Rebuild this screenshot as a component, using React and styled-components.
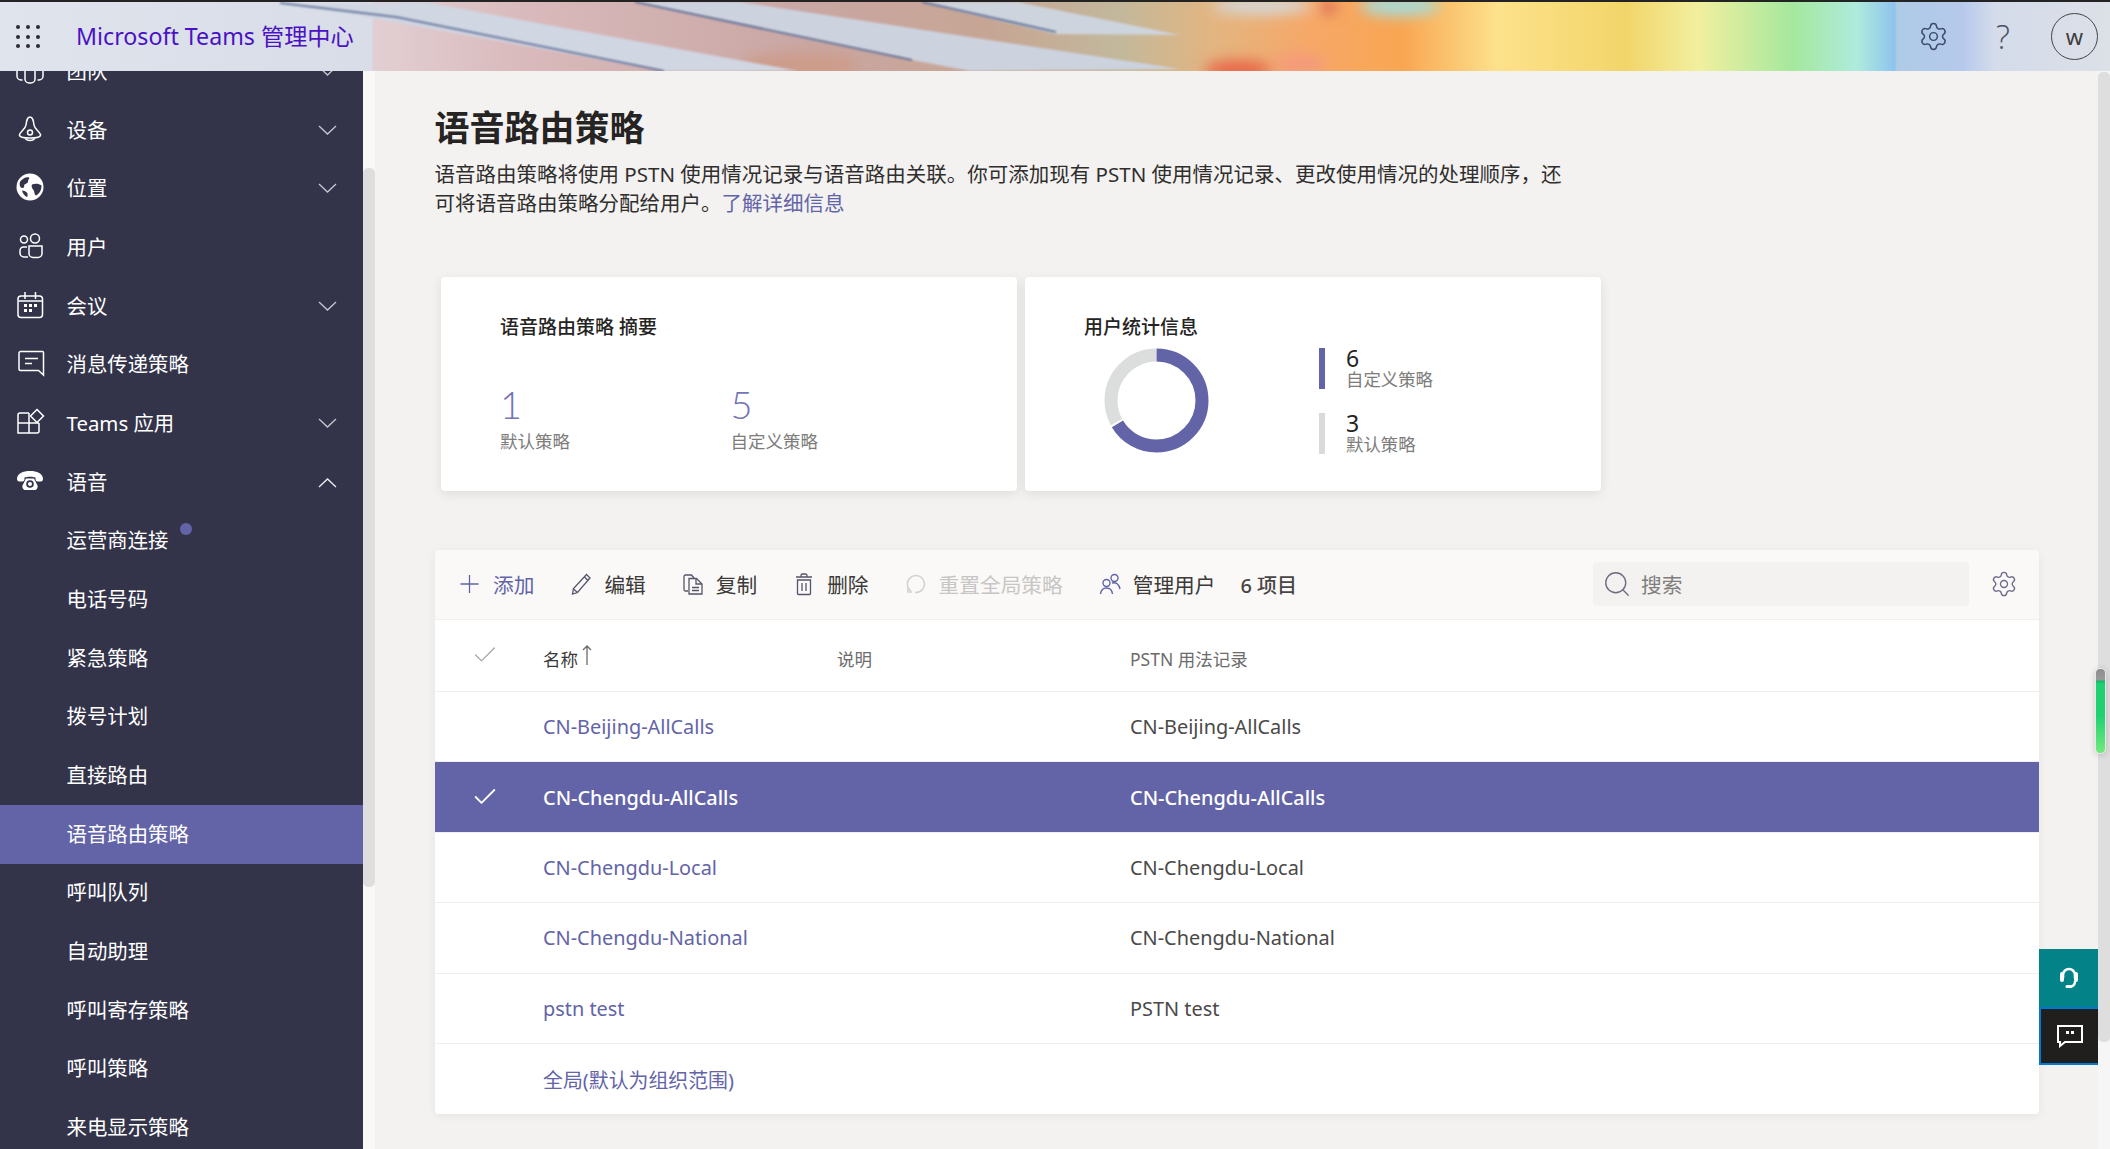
import React from "react";
import styled, { createGlobalStyle } from "styled-components";
import { Search, Settings, Check } from "lucide-react";

const purple = "#6264a7";
const font = `"Noto Sans", "Noto Sans CJK SC", sans-serif`;

const GlobalStyle = createGlobalStyle`
  html, body { margin: 0; padding: 0; height: 100%; overflow: hidden; }
  body { font-family: ${font}; background: #f3f2f1; color: #252423; }
  #root { height: 100%; }
`;

const Page = styled.div`
  position: relative;
  width: 2110px;
  height: 1149px;
  display: flex;
  flex-direction: column;
  overflow: hidden;
`;

const Header = styled.header`
  position: relative;
  z-index: 2;
  flex: 0 0 71px;
  display: flex;
  align-items: center;
  border-top: 2px solid #232323;
  box-sizing: border-box;
  overflow: hidden;
`;

const Art = styled.svg`
  position: absolute;
  left: 0;
  top: 0;
  width: 100%;
  height: 100%;
`;

const Waffle = styled.div`
  position: relative;
  margin-left: 16px;
  width: 24px;
  display: grid;
  grid-template-columns: repeat(3, 4px);
  gap: 5.5px;
  justify-content: space-between;
  span {
    width: 4px;
    height: 4px;
    border-radius: 50%;
    background: #2c2a33;
  }
`;

const Brand = styled.div`
  position: relative;
  margin-left: 36px;
  padding-bottom: 4px;
  font-size: 23.2px;
  color: #4a12c4;
  white-space: nowrap;
`;

const HeaderTools = styled.div`
  position: relative;
  margin-left: auto;
  display: flex;
  align-items: center;
  padding-right: 12px;
  color: #3c4a6a;
`;

const Help = styled.div`
  margin-left: 42px;
  width: 24px;
  text-align: center;
  font-size: 33px;
  font-weight: 300;
  font-family: "Open Sans", sans-serif;
  line-height: 36px;
  color: #4a5060;
`;

const Avatar = styled.div`
  margin-left: 36px;
  width: 47px;
  height: 47px;
  box-sizing: border-box;
  border: 1.5px solid #444;
  border-radius: 50%;
  display: flex;
  align-items: center;
  justify-content: center;
  font-size: 22px;
  color: #3d3d3d;
  padding-bottom: 1px;
`;

const Body = styled.div`
  flex: 1;
  display: flex;
  min-height: 0;
`;

const Sidebar = styled.nav`
  flex: 0 0 363px;
  background: #33344a;
  overflow: hidden;
`;

const NavList = styled.div`
  margin-top: -28.3px;
`;

const NavItem = styled.div`
  position: relative;
  height: 58.68px;
  display: flex;
  align-items: center;
  padding: 0 26px 4px ${(p) => (p.$sub ? 66.5 : 16)}px;
  box-sizing: border-box;
  background: ${(p) => (p.$active ? purple : "transparent")};
  color: #fff;
  font-size: 20.4px;
`;

const NavIcon = styled.svg`
  flex: 0 0 28px;
  width: 28px;
  height: 28px;
  margin-right: 22.5px;
  overflow: visible;
`;

const NavChevron = styled.svg`
  margin: 3px 0 0 auto;
  width: 19px;
  height: 11px;
`;

const Dot = styled.span`
  position: absolute;
  left: 179.5px;
  top: 10.5px;
  width: 12px;
  height: 12px;
  border-radius: 50%;
  background: ${purple};
`;

const Track = styled.div`
  flex: 0 0 ${(p) => p.$w}px;
  background: ${(p) => p.$bg};
`;

const Thumb = styled.div`
  margin-top: ${(p) => p.$top}px;
  height: ${(p) => p.$h}px;
  background: #dedede;
  border-radius: 5px;
`;

const Main = styled.main`
  flex: 1;
  min-width: 0;
  padding: 37px 59px 0 59.5px;
  background: #f3f2f1;
`;

const Title = styled.h1`
  margin: 0;
  font-size: 35px;
  line-height: 40px;
  font-weight: 700;
  color: #252423;
`;

const Intro = styled.p`
  margin: 11.5px 0 0;
  font-size: 20.5px;
  line-height: 29px;
  color: #2f2e2d;
  white-space: nowrap;
  a {
    color: ${purple};
    text-decoration: none;
  }
`;

const Cards = styled.div`
  margin: 59.5px 0 0 6.5px;
  display: flex;
  gap: 8px;
`;

const Card = styled.section`
  width: 576px;
  height: 214px;
  box-sizing: border-box;
  padding: 37px 0 0 59px;
  background: #fff;
  border-radius: 4px;
  box-shadow: 0 3px 12px rgba(0, 0, 0, 0.09);
  display: ${(p) => (p.$row ? "flex" : "block")};
`;

const CardTitle = styled.h2`
  margin: 0;
  font-size: 19px;
  line-height: 26px;
  font-weight: 500;
  color: #252423;
`;

const Stats = styled.div`
  display: flex;
  margin-top: 42px;
`;

const Stat = styled.div`
  width: 230.5px;
`;

const StatNum = styled.div`
  font-family: Lato, sans-serif;
  font-weight: 300;
  font-size: 38px;
  line-height: 44px;
  color: #7274b6;
`;

const StatLabel = styled.div`
  margin-top: 3px;
  font-size: 17.5px;
  line-height: 24px;
  color: #7d7c7b;
`;

const ChartCol = styled.div`
  width: 235px;
`;

const Donut = styled.svg`
  display: block;
  width: 105px;
  height: 105px;
  margin: 8px 0 0 20px;
`;

const Legend = styled.div`
  padding-top: 34px;
  display: flex;
  flex-direction: column;
  gap: 24px;
`;

const LegendRow = styled.div`
  height: 41px;
  display: flex;
  border-left: 6px solid ${(p) => p.$color};
  padding-left: 21px;
  flex-direction: column;
  justify-content: flex-end;
`;

const LegendNum = styled.div`
  font-size: 23px;
  line-height: 21px;
  color: #252423;
`;

const LegendLabel = styled.div`
  font-size: 17.4px;
  line-height: 20px;
  color: #7d7c7b;
`;

const Table = styled.section`
  margin-top: 59px;
  background: #fff;
  border-radius: 4px;
  box-shadow: 0 2px 10px rgba(0, 0, 0, 0.06);
  overflow: hidden;
`;

const Toolbar = styled.div`
  height: 70px;
  box-sizing: border-box;
  border-bottom: 1px solid #f0efee;
  background: #faf9f8;
  display: flex;
  align-items: center;
  padding: 0 0 1px 24.5px;
  gap: 36px;
`;

const ToolItem = styled.div`
  display: flex;
  align-items: center;
  gap: 12px;
  font-size: 20.7px;
  white-space: nowrap;
  color: ${(p) => (p.$primary ? purple : p.$disabled ? "#c8c6c4" : "#3b3a39")};
`;

const ToolIcon = styled.svg`
  width: 22px;
  height: 24px;
  flex: 0 0 22px;
  color: ${(p) => (p.$disabled ? "#d2d0ce" : p.$purple ? purple : "#55546a")};
`;

const Count = styled.div`
  margin-left: -11px;
  font-size: 20px;
  font-weight: 500;
  color: #484644;
  white-space: nowrap;
`;

const SearchBox = styled.div`
  margin-left: auto;
  width: 376px;
  height: 44px;
  box-sizing: border-box;
  padding-left: 9px;
  display: flex;
  align-items: center;
  gap: 9px;
  background: #f3f2f1;
  border-radius: 4px;
  font-size: 20.7px;
  color: #7f7e7d;
  svg {
    color: #6e6d80;
  }
`;

const TableGear = styled.div`
  margin: 0 21px 0 -15px;
  display: flex;
  color: #6e6d8c;
`;

const Row = styled.div`
  display: grid;
  grid-template-columns: 108.5px 294px 293px 1fr;
  align-items: center;
  height: ${(p) => (p.$head ? "72px" : "70.4px")};
  box-sizing: border-box;
  padding-top: ${(p) => (p.$head ? "5px" : "0")};
  border-bottom: ${(p) => (p.$last ? "none" : "1px solid #f0efee")};
  background: ${(p) => (p.$selected ? purple : "#fff")};
  color: ${(p) => (p.$selected ? "#fff" : "#4a4948")};
  font-size: ${(p) => (p.$head ? "17.5px" : "19.9px")};
  font-weight: ${(p) => (p.$selected ? 500 : 400)};
  white-space: nowrap;
`;

const CheckCell = styled.div`
  padding: ${(p) => (p.$head ? "0 0 6px 36px" : "0 0 0 36px")};
  display: flex;
  color: ${(p) => (p.$head ? "#a5a5a5" : "#fff")};
`;

const NameLink = styled.span`
  color: ${(p) => (p.$selected ? "#fff" : purple)};
`;

const SortName = styled.div`
  display: flex;
  align-items: center;
  gap: 4px;
  color: #3b3a39;
  svg {
    margin-top: -6px;
    color: #6b6a69;
  }
`;

const ColHead = styled.div`
  color: #6d6c6b;
`;

const Side = styled.div`
  position: absolute;
  right: 12px;
  top: 949px;
  width: 59px;
`;

const SideBtn = styled.div`
  height: 58px;
  box-sizing: border-box;
  display: flex;
  align-items: center;
  justify-content: center;
  background: ${(p) => p.$bg};
  ${(p) => p.$framed && "border: 2px solid #0078d4; border-right: none;"}
`;

// the green level bar that floats over the page scrollbar
const Level = styled.div`
  position: absolute;
  left: 2095px;
  top: 668px;
  width: 11px;
  height: 86px;
  box-sizing: border-box;
  border: 1px solid #e8e8e8;
  border-radius: 5px;
  box-shadow: 0 1px 6px rgba(0, 0, 0, 0.18);
  background: linear-gradient(#8d8d8d 0, #9a9a9a 11px, #12b765 12px, #1fd072 15px, #1fd072 55%, #72ea7c 100%);
`;

const navItems = [
  { label: "团队", icon: "team", chevron: "down" },
  { label: "设备", icon: "device", chevron: "down" },
  { label: "位置", icon: "globe", chevron: "down" },
  { label: "用户", icon: "users" },
  { label: "会议", icon: "calendar", chevron: "down" },
  { label: "消息传递策略", icon: "message" },
  { label: "Teams 应用", icon: "apps", chevron: "down" },
  { label: "语音", icon: "phone", chevron: "up" },
  { label: "运营商连接", sub: true, dot: true },
  { label: "电话号码", sub: true },
  { label: "紧急策略", sub: true },
  { label: "拨号计划", sub: true },
  { label: "直接路由", sub: true },
  { label: "语音路由策略", sub: true, active: true },
  { label: "呼叫队列", sub: true },
  { label: "自动助理", sub: true },
  { label: "呼叫寄存策略", sub: true },
  { label: "呼叫策略", sub: true },
  { label: "来电显示策略", sub: true },
];

const rows = [
  { name: "CN-Beijing-AllCalls", usage: "CN-Beijing-AllCalls" },
  { name: "CN-Chengdu-AllCalls", usage: "CN-Chengdu-AllCalls", selected: true },
  { name: "CN-Chengdu-Local", usage: "CN-Chengdu-Local" },
  { name: "CN-Chengdu-National", usage: "CN-Chengdu-National" },
  { name: "pstn test", usage: "PSTN test" },
  { name: "全局(默认为组织范围)", usage: "" },
];

const navGlyphs = {
  team: (
    <g fill="none" stroke="#fff" strokeWidth="1.5">
      <rect x="9" y="4" width="10" height="23" rx="4" />
      <path d="M6 12H2.500A1.500 1.500 0 0 0 1 13.500V20a4 4 0 0 0 4 4h1.500M22 12h3.500a1.500 1.500 0 0 1 1.500 1.500V20a4 4 0 0 1-4 4h-1.500" />
    </g>
  ),
  device: (
    <g fill="none" stroke="#fff" strokeWidth="1.5">
      <path d="M14 2c-3 0-3.500 4-4 8-.5 4-5 6-6.500 9.500C3 22 7 23 14 23s11-1 10.500-3.500C23 16 18.500 14 18 10c-.5-4-1-8-4-8z" />
      <circle cx="14" cy="17.500" r="2.500" />
      <path d="M9.500 23.500c1 2.500 8 2.500 9 0" />
    </g>
  ),
  globe: (
    <g>
      <circle cx="14" cy="14" r="13.500" fill="#fff" />
      <path d="M5 7.500C8 4.500 11 3.500 13 4.500c1 1-1 2-1 4s-3 2-4 4c1 2-1 3-3 2-1.500-1-2-5 0-7z" fill="#33344a" />
      <path d="M16 11.500c3-1 7-1 9.500 1 .2 4-2 8.500-5.500 10-2-1-1-4-3-6-1-1.500-2-3.500-1-5z" fill="#33344a" />
      <path d="M6 17.500c2 0 4.500 1 5.500 3 .3 1.500 0 3-.5 3.500-2.500-1-4.500-4-5-6.500z" fill="#33344a" />
    </g>
  ),
  users: (
    <g fill="none" stroke="#fff" strokeWidth="1.5">
      <circle cx="8" cy="7.500" r="3.500" />
      <circle cx="19" cy="6.500" r="4.500" />
      <path d="M11 15H7.500A3.500 3.500 0 0 0 4 18.500V21a4 4 0 0 0 4 4h4" />
      <path d="M13 14h13v7.500a4 4 0 0 1-4 4h-5a4 4 0 0 1-4-4z" />
    </g>
  ),
  calendar: (
    <g>
      <rect x="2" y="5" width="24.500" height="21.500" rx="3" fill="none" stroke="#fff" strokeWidth="1.500" />
      <path d="M9 1v7M19.500 1v7M2.500 10h23.500" stroke="#fff" strokeWidth="1.500" fill="none" />
      <path d="M8 13h3v3H8zM13 13h3v3h-3zM18 13h3v3h-3zM8 18h3v3H8zM13 18h3v3h-3z" fill="#fff" />
    </g>
  ),
  message: (
    <g fill="none" stroke="#fff" strokeWidth="1.500">
      <path d="M4.500 2.500h22a1 1 0 0 1 1 1v22.500l-5-4.500H4.500a1.500 1.500 0 0 1-1.500-1.500V4a1.500 1.500 0 0 1 1.500-1.500z" />
      <path d="M9 9.500h13M9 14.500h7" />
    </g>
  ),
  apps: (
    <g fill="none" stroke="#fff" strokeWidth="1.500">
      <path d="M13 5H4a2 2 0 0 0-2 2v18h19a2 2 0 0 0 2-2v-8" />
      <path d="M2 15h21M13 5v20" />
      <path d="M21 1.500 27.500 8 21 14.500 14.500 8z" />
    </g>
  ),
  phone: (
    <g fill="#fff">
      <path d="M1 12c0-5.500 6-8 13-8s13 2.500 13 8c0 1.500-1 2.500-2 2.500h-3.500c-1.200 0-2-1-2-2.500v-1.500c-3-1-8-1-11 0V12c0 1.500-.8 2.500-2 2.500H3c-1 0-2-1-2-2.500z" />
      <path d="M10 11.500h8l3.500 7c.6 2.500-1 4.500-3 4.500h-9c-2 0-3.600-2-3-4.500z" />
      <circle cx="14" cy="17" r="3.800" fill="#33344a" />
      <circle cx="14" cy="17" r="2" />
    </g>
  ),
};

const Chevron = ({ up }) => (
  <NavChevron viewBox="0 0 19 11">
    <path
      d={up ? "M1 10 9.500 2 18 10" : "M1 1l8.500 8L18 1"}
      fill="none"
      stroke={up ? "#f0f0f4" : "#c6c6d0"}
      strokeWidth="1.300"
    />
  </NavChevron>
);

const HeaderArt = () => (
  <Art viewBox="0 0 2110 69" preserveAspectRatio="none">
    <defs>
      <linearGradient id="base" x1="0" y1="0" x2="2110" y2="0" gradientUnits="userSpaceOnUse">
        <stop offset="0" stopColor="#e0e4ed" />
        <stop offset="0.14" stopColor="#d9dee8" />
        <stop offset="0.176" stopColor="#d8dde7" />
        <stop offset="0.177" stopColor="#e2cfd3" />
        <stop offset="0.25" stopColor="#d9b9bb" />
        <stop offset="0.38" stopColor="#c9a7a4" />
        <stop offset="0.47" stopColor="#c7a594" />
        <stop offset="0.53" stopColor="#c2b89c" />
        <stop offset="0.575" stopColor="#e3b581" />
        <stop offset="0.62" stopColor="#f6a868" />
        <stop offset="0.665" stopColor="#f9a652" />
        <stop offset="0.71" stopColor="#fde28c" />
        <stop offset="0.77" stopColor="#f2d569" />
        <stop offset="0.805" stopColor="#f2ef9f" />
        <stop offset="0.85" stopColor="#a4e89e" />
        <stop offset="0.88" stopColor="#afebdc" />
        <stop offset="0.898" stopColor="#8ec4ee" />
        <stop offset="0.899" stopColor="#aecbe6" />
        <stop offset="0.93" stopColor="#b6c9ec" />
        <stop offset="0.945" stopColor="#d4dbea" />
        <stop offset="1" stopColor="#dce0e7" />
      </linearGradient>
      <filter id="soft">
        <feGaussianBlur stdDeviation="1.2" />
      </filter>
      <filter id="wide">
        <feGaussianBlur stdDeviation="7" />
      </filter>
    </defs>
    <rect width="2110" height="69" fill="url(#base)" />
    <g filter="url(#wide)">
      <ellipse cx="1238" cy="68" rx="34" ry="10" fill="#e8664a" />
      <ellipse cx="1300" cy="62" rx="26" ry="10" fill="#f59a7c" />
      <ellipse cx="1329" cy="5" rx="8" ry="6" fill="#cf5c55" />
      <ellipse cx="1262" cy="4" rx="50" ry="8" fill="#d3dade" />
      <ellipse cx="1400" cy="4" rx="40" ry="10" fill="#a6dcdc" />
      <ellipse cx="800" cy="64" rx="60" ry="14" fill="#cd9c8a" />
    </g>
    <g filter="url(#soft)">
      <path d="M300 3 424 0 798 69H664z" fill="#d0d6e2" />
      <path d="M635 0H740L1180 67 970 69 912 58z" fill="#ccd3df" />
      <path d="M922 0h96l162 33-124-1z" fill="#ced4dd" />
    </g>
    <g fill="none" stroke="#4b5f8c" strokeWidth="1.600" filter="url(#soft)">
      <path d="M280 1 396 15 664 69" />
      <path d="M635 0 912 58" />
      <path d="M922 0 1056 30" />
    </g>
  </Art>
);

export default function App() {
  return (
    <Page>
      <GlobalStyle />
      <Header>
        <HeaderArt />
        <Waffle>
          {Array.from({ length: 9 }, (_, i) => (
            <span key={i} />
          ))}
        </Waffle>
        <Brand>Microsoft Teams 管理中心</Brand>
        <HeaderTools>
          <Settings size={31} strokeWidth={1.15} />
          <Help>?</Help>
          <Avatar>w</Avatar>
        </HeaderTools>
      </Header>
      <Body>
        <Sidebar>
          <NavList>
            {navItems.map((item) => (
              <NavItem key={item.label} $sub={item.sub} $active={item.active}>
                {item.icon && <NavIcon viewBox="0 0 28 28">{navGlyphs[item.icon]}</NavIcon>}
                {item.label}
                {item.dot && <Dot />}
                {item.chevron && <Chevron up={item.chevron === "up"} />}
              </NavItem>
            ))}
          </NavList>
        </Sidebar>
        <Track $w={12} $bg="#f8f8f7">
          <Thumb $top={97} $h={719} />
        </Track>
        <Main>
          <Title>语音路由策略</Title>
          <Intro>
            语音路由策略将使用 PSTN 使用情况记录与语音路由关联。你可添加现有 PSTN 使用情况记录、更改使用情况的处理顺序，还
            <br />
            可将语音路由策略分配给用户。<a href="#more">了解详细信息</a>
          </Intro>
          <Cards>
            <Card>
              <CardTitle>语音路由策略 摘要</CardTitle>
              <Stats>
                <Stat>
                  <StatNum>1</StatNum>
                  <StatLabel>默认策略</StatLabel>
                </Stat>
                <Stat>
                  <StatNum>5</StatNum>
                  <StatLabel>自定义策略</StatLabel>
                </Stat>
              </Stats>
            </Card>
            <Card $row>
              <ChartCol>
                <CardTitle>用户统计信息</CardTitle>
                <Donut viewBox="0 0 105 105">
                  <g fill="none" strokeWidth="13" transform="rotate(-90 52.500 52.500)">
                    <circle cx="52.500" cy="52.500" r="45.500" stroke="#dcdede" strokeDasharray="93.300 192.600" strokeDashoffset="-191.600" />
                    <circle cx="52.500" cy="52.500" r="45.500" stroke={purple} strokeDasharray="189.600 96.300" />
                  </g>
                </Donut>
              </ChartCol>
              <Legend>
                <LegendRow $color={purple}>
                  <LegendNum>6</LegendNum>
                  <LegendLabel>自定义策略</LegendLabel>
                </LegendRow>
                <LegendRow $color="#d9dbdb">
                  <LegendNum>3</LegendNum>
                  <LegendLabel>默认策略</LegendLabel>
                </LegendRow>
              </Legend>
            </Card>
          </Cards>
          <Table>
            <Toolbar>
              <ToolItem $primary>
                <ToolIcon viewBox="0 0 22 24" fill="none" stroke="currentColor" strokeWidth="1.300" $purple>
                  <path d="M1.500 12h18M10.500 3v18" />
                </ToolIcon>
                添加
              </ToolItem>
              <ToolItem>
                <ToolIcon viewBox="0 0 22 24" fill="none" stroke="currentColor" strokeWidth="1.300">
                  <path d="M16.500 2.500 20 6 7.500 20.500 2.500 22l1-5.500z" />
                  <path d="M14.500 5l3.500 3.500M3.500 17l4 3.500" />
                </ToolIcon>
                编辑
              </ToolItem>
              <ToolItem>
                <ToolIcon viewBox="0 0 22 24" fill="none" stroke="currentColor" strokeWidth="1.300">
                  <path d="M6 19H3.500a1.500 1.500 0 0 1-1.500-1.500v-13A1.500 1.500 0 0 1 3.500 3h6L12 6" />
                  <path d="M7 6.500h7.500L20 12v10H7z" />
                  <path d="M14 7v5h6M10 15.500h7M10 18.500h7" />
                </ToolIcon>
                复制
              </ToolItem>
              <ToolItem>
                <ToolIcon viewBox="0 0 22 24" fill="none" stroke="currentColor" strokeWidth="1.300">
                  <path d="M3 5h16M8 5V3.500A1.500 1.500 0 0 1 9.500 2h3A1.500 1.500 0 0 1 14 3.500V5" />
                  <path d="M4.500 8h13v13.500a1 1 0 0 1-1 1h-11a1 1 0 0 1-1-1zM9 11v8M13 11v8" />
                </ToolIcon>
                删除
              </ToolItem>
              <ToolItem $disabled>
                <ToolIcon viewBox="0 0 22 24" fill="none" stroke="currentColor" strokeWidth="1.500" $disabled>
                  <path d="M6 19a8.500 8.500 0 1 1 4 1.500" />
                  <path d="M3 16v4h4" />
                </ToolIcon>
                重置全局策略
              </ToolItem>
              <ToolItem>
                <ToolIcon viewBox="0 0 22 24" fill="none" stroke="currentColor" strokeWidth="1.400" $purple>
                  <circle cx="7.500" cy="11" r="3.500" />
                  <circle cx="15.500" cy="6" r="3.500" />
                  <path d="M1.500 22c.5-4 2.500-6 6-6s5.500 2 6 6M13 11c4-1 7 1 8 6" />
                </ToolIcon>
                管理用户
              </ToolItem>
              <Count>6 项目</Count>
              <SearchBox>
                <Search size={30} strokeWidth={1.1} />
                搜索
              </SearchBox>
              <TableGear>
                <Settings size={28} strokeWidth={1.2} />
              </TableGear>
            </Toolbar>
            <Row $head>
              <CheckCell $head>
                <Check size={28} strokeWidth={1.1} />
              </CheckCell>
              <SortName>
                名称
                <svg width="10" height="22" viewBox="0 0 10 22" fill="none" stroke="currentColor" strokeWidth="1.300">
                  <path d="M5 21V2M1 6l4-4 4 4" />
                </svg>
              </SortName>
              <ColHead>说明</ColHead>
              <ColHead>PSTN 用法记录</ColHead>
            </Row>
            {rows.map((row, i) => (
              <Row key={row.name} $selected={row.selected} $last={i === rows.length - 1}>
                <CheckCell>{row.selected && <Check size={28} strokeWidth={1.6} />}</CheckCell>
                <NameLink $selected={row.selected}>{row.name}</NameLink>
                <div />
                <div>{row.usage}</div>
              </Row>
            ))}
          </Table>
        </Main>
        <Track $w={12} $bg="#f6f6f6">
          <Thumb $top={1} $h={970} />
        </Track>
      </Body>
      <Level />
      <Side>
        <SideBtn $bg="#038387">
          <svg width="20" height="24" viewBox="0 0 20 24" fill="none" stroke="#fff">
            <path d="M4 12V9a6 6 0 0 1 12 0v3" strokeWidth="2.600" />
            <path d="M3 8v6M17 8v6" strokeWidth="4" strokeLinecap="round" />
            <path d="M16 15c0 3.500-2 5.500-5 5.500" strokeWidth="2.400" />
            <path d="M8 20.500h4" strokeWidth="3" strokeLinecap="round" />
          </svg>
        </SideBtn>
        <SideBtn $bg="#201f1e" $framed>
          <svg width="26" height="24" viewBox="0 0 26 24" fill="none" stroke="#fff" strokeWidth="2">
            <path d="M1 2h24v16H8l-5 4v-4H1z" />
            <path d="M9 7h3v3H9zM14 7h3v3h-3z" fill="#fff" strokeWidth="0" />
          </svg>
        </SideBtn>
      </Side>
    </Page>
  );
}
